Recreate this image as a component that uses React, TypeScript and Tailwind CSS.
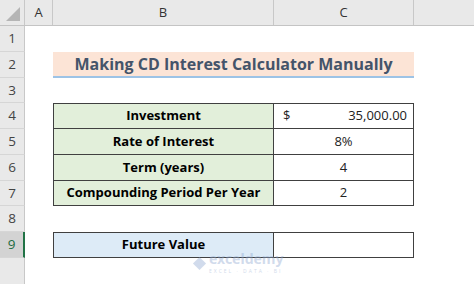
import React from "react";

const font = { fontFamily: "'Open Sans', 'Noto Sans', sans-serif" };

function RowNum({ n, active }: { n: number | string; active?: boolean }) {
  return (
    <div
      className={
        "w-[25px] shrink-0 flex items-center justify-center border-b border-[#d6d6d6] text-[13.5px] " +
        (active
          ? "bg-[#d3d3d3] text-[#1e6b41] border-r-2 border-r-[#217346]"
          : "bg-[#e9e9e9] text-[#444] border-r border-r-[#c8c8c8]")
      }
    >
      {n}
    </div>
  );
}

function Row({ n, h, active, children }: { n: number | string; h: string; active?: boolean; children?: React.ReactNode }) {
  return (
    <div className={"flex " + h}>
      <RowNum n={n} active={active} />
      <div className="w-[28px] shrink-0" />
      <div className="flex w-[361px] shrink-0">{children}</div>
      <div className="flex-1" />
    </div>
  );
}

export default function App() {
  const bord = "border-[#404040]";
  return (
    <div className="w-[474px] h-[284px] overflow-hidden bg-white relative" style={font}>
      {/* header */}
      <div className="flex h-[26px] bg-[#e9e9e9] border-b border-[#c4c4c4] text-[13px] text-[#333]">
        <div className="w-[25px] shrink-0 border-r border-[#c8c8c8] flex items-end justify-end p-[4px]">
          <svg width="14" height="14" viewBox="0 0 14 14">
            <polygon points="14,0 14,14 0,14" fill="#b5b5b5" />
          </svg>
        </div>
        <div className="w-[28px] shrink-0 border-r border-[#c8c8c8] flex items-center justify-center">A</div>
        <div className="w-[221px] shrink-0 border-r border-[#c8c8c8] flex items-center justify-center">B</div>
        <div className="w-[140px] shrink-0 border-r border-[#c8c8c8] flex items-center justify-center">C</div>
        <div className="flex-1" />
      </div>

      <Row n={1} h="h-[26px]" />
      <Row n={2} h="h-[26px]">
        <div className="w-full h-full bg-[#fce4d6] border-b-2 border-[#9dc3e6] flex items-center justify-center text-[16px] font-bold text-[#44546a]">
          Making CD Interest Calculator Manually
        </div>
      </Row>
      <Row n={3} h="h-[25px]" />
      <Row n={4} h="h-[26px]">
        <div className={`w-[221px] h-full bg-[#e2efda] border-[1.5px] ${bord} flex items-center justify-center font-bold text-[13px] text-black`}>
          Investment
        </div>
        <div className={`flex-1 h-full border-y-[1.5px] border-r-[1.5px] ${bord} flex items-center justify-between pl-[9px] pr-[6px] text-[13px] text-[#222]`}>
          <span>$</span>
          <span>35,000.00</span>
        </div>
      </Row>
      <Row n={5} h="h-[26px]">
        <div className={`w-[221px] h-full bg-[#e2efda] border-x-[1.5px] border-b-[1.5px] ${bord} flex items-center justify-center font-bold text-[13px] text-black`}>
          Rate of Interest
        </div>
        <div className={`flex-1 h-full border-b-[1.5px] border-r-[1.5px] ${bord} flex items-center justify-center text-[13px] text-[#222]`}>
          8%
        </div>
      </Row>
      <Row n={6} h="h-[26px]">
        <div className={`w-[221px] h-full bg-[#e2efda] border-x-[1.5px] border-b-[1.5px] ${bord} flex items-center justify-center font-bold text-[13px] text-black`}>
          Term (years)
        </div>
        <div className={`flex-1 h-full border-b-[1.5px] border-r-[1.5px] ${bord} flex items-center justify-center text-[13px] text-[#222]`}>
          4
        </div>
      </Row>
      <Row n={7} h="h-[25px]">
        <div className={`w-[221px] h-full bg-[#e2efda] border-x-[1.5px] border-b-[1.5px] ${bord} flex items-center justify-center font-bold text-[13px] text-black whitespace-nowrap`}>
          Compounding Period Per Year
        </div>
        <div className={`flex-1 h-full border-b-[1.5px] border-r-[1.5px] ${bord} flex items-center justify-center text-[13px] text-[#222]`}>
          2
        </div>
      </Row>
      <Row n={8} h="h-[26px]" />
      <Row n={9} h="h-[26px]" active>
        <div className={`w-[221px] h-full bg-[#ddebf7] border-[1.5px] ${bord} flex items-center justify-center font-bold text-[13px] text-black`}>
          Future Value
        </div>
        <div className={`flex-1 h-full border-y-[1.5px] border-r-[1.5px] ${bord}`} />
      </Row>
      <Row n="" h="h-[30px]" />

      {/* watermark */}
      <div className="absolute left-[192px] top-[252px] flex items-center gap-[2px] opacity-40 pointer-events-none">
        <svg width="15" height="15" viewBox="0 0 16 16">
          <path d="M8 1 L15 8 L8 15 L1 8 Z" fill="#8fa8d0" />
        </svg>
        <div className="flex flex-col">
          <span className="text-[14px] leading-[14px] font-bold text-[#8fa8d0]" style={{ fontFamily: "'Noto Sans', sans-serif" }}>exceldemy</span>
          <span className="mt-[3px] text-[5px] leading-[5px] tracking-[2px] text-[#8fa8d0]">EXCEL · DATA · BI</span>
        </div>
      </div>
    </div>
  );
}
